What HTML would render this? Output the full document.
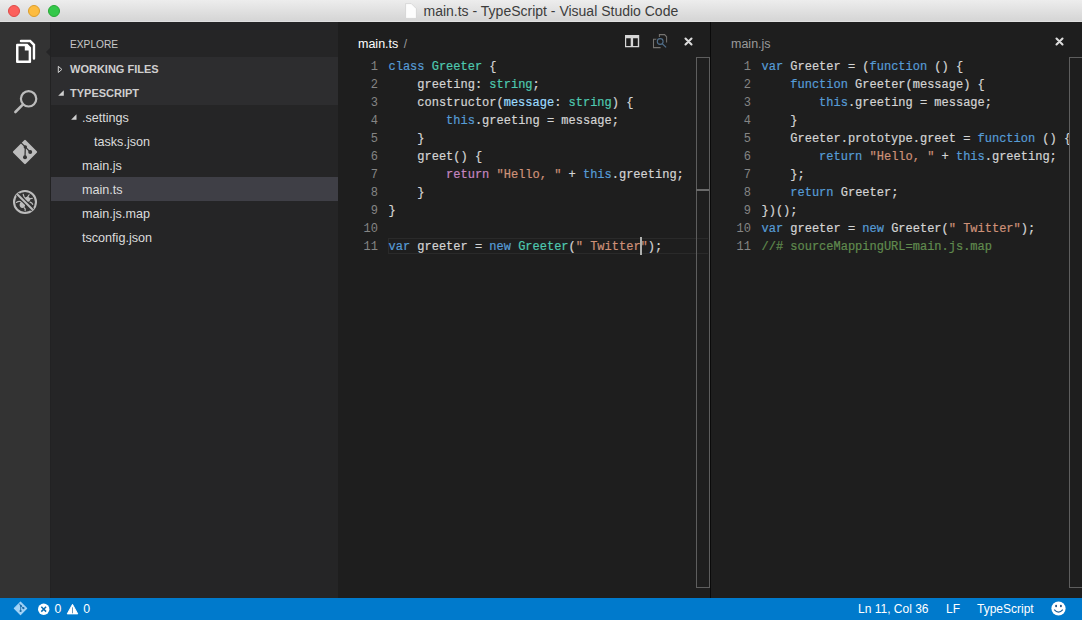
<!DOCTYPE html>
<html><head><meta charset="utf-8">
<style>
*{margin:0;padding:0;box-sizing:border-box}
html,body{width:1082px;height:620px;overflow:hidden;background:#1e1e1e;font-family:"Liberation Sans",sans-serif}
.abs{position:absolute}
#title{left:0;top:0;width:1082px;height:22px;background:linear-gradient(#ededed,#d5d5d5);border-bottom:1px solid #e0e0e0}
.tl{position:absolute;top:5px;width:12px;height:12px;border-radius:50%}
#ttext{position:absolute;left:423.5px;top:3px;font-size:14px;color:#3c3c3c;white-space:nowrap;line-height:16px}
#act{left:0;top:22px;width:50px;height:576px;background:#333333}
#side{left:50px;top:22px;width:288px;height:576px;background:#252526}
#ed1{left:338px;top:22px;width:372px;height:576px;background:#1e1e1e}
#div{left:710px;top:22px;width:1px;height:576px;background:#0a0a0a}
#ed2{left:711px;top:22px;width:371px;height:576px;background:#1e1e1e}
#status{left:0;top:598px;width:1082px;height:22px;background:#007acc;color:#fff;font-size:12px}
.row{position:absolute;left:0;width:288px;height:24px;line-height:25px;color:#dcdcdc;font-size:12.6px;white-space:nowrap}
.row.f{line-height:26px}
.hdr{font-weight:bold;font-size:11px;color:#cfcfcf}
.code{-webkit-text-stroke:0.2px;position:absolute;font-family:"Liberation Mono",monospace;font-size:12px;line-height:18px;white-space:pre;color:#d4d4d4}
.ln{position:absolute;font-family:"Liberation Mono",monospace;font-size:12px;line-height:18px;white-space:pre;color:#858585;text-align:right}
.k{color:#569cd6}.t{color:#4ec9b0}.s{color:#ce9178}.r{color:#c586c0}.p{color:#9cdcfe}.c{color:#608b4e}
</style></head><body>
<div id="title" class="abs">
  <div class="tl" style="left:8px;background:#fc605c;border:0.5px solid #de4a47"></div>
  <div class="tl" style="left:28px;background:#fdbc40;border:0.5px solid #dc9d2a"></div>
  <div class="tl" style="left:48px;background:#34c84a;border:0.5px solid #27a735"></div>
  <svg class="abs" style="left:405px;top:3px" width="12" height="16" viewBox="0 0 12 16"><path d="M0.6 0.6H6.3L11.4 5.7V15.4H0.6Z" fill="#fdfdfd" stroke="#cfcfcf" stroke-width="0.7" stroke-linejoin="round"/></svg>
  <div id="ttext">main.ts - TypeScript - Visual Studio Code</div>
</div>
<div id="act" class="abs">
  <!-- explorer icon -->
  <svg class="abs" style="left:10px;top:12px" width="34" height="34" viewBox="0 0 620 620">
    <path d="M200 127H367L437 197V448" fill="none" stroke="#fff" stroke-width="44" stroke-linejoin="miter" stroke-linecap="round"/>
    <path fill="#fff" fill-rule="evenodd" d="M130 180H318L385 247V510Q385 530 365 530H130Q110 530 110 510V200Q110 180 130 180ZM155 225H270V300H340V485H155Z"/>
  </svg>
  <!-- search icon -->
  <svg class="abs" style="left:12px;top:64px" width="28" height="28" viewBox="0 0 28 28">
    <circle cx="16.6" cy="12.8" r="7.7" fill="none" stroke="#bcbcbc" stroke-width="2.2"/>
    <line x1="11" y1="18.4" x2="3.4" y2="26" stroke="#bcbcbc" stroke-width="2.6" stroke-linecap="round"/>
  </svg>
  <!-- git icon -->
  <svg class="abs" style="left:8px;top:112px" width="34" height="34" viewBox="0 0 34 34">
    <path d="M17 7L28 18L17 29L6 18Z" fill="#bcbcbc" stroke="#bcbcbc" stroke-width="2.2" stroke-linejoin="round"/>
    <path d="M12.6 8.4L17.3 12.9L22.2 18.1M17.3 12.9L17 23.3" fill="none" stroke="#333333" stroke-width="1.25"/>
    <circle cx="17.3" cy="12.9" r="1.7" fill="#333333"/>
    <circle cx="22.2" cy="18.1" r="2" fill="#333333"/>
    <circle cx="17" cy="23.3" r="2" fill="#333333"/>
  </svg>
  <!-- debug icon -->
  <svg class="abs" style="left:8px;top:163px" width="34" height="34" viewBox="0 0 620 620">
    <circle cx="310" cy="310" r="200" fill="none" stroke="#bcbcbc" stroke-width="38"/>
    <ellipse cx="262" cy="362" rx="50" ry="56" fill="#bcbcbc"/>
    <ellipse cx="352" cy="262" rx="52" ry="48" fill="#bcbcbc"/>
    <path d="M240 305Q195 290 152 318M295 415Q325 435 312 470M300 235L278 172M360 215L385 178M392 252L445 242M402 312Q440 322 450 352" fill="none" stroke="#bcbcbc" stroke-width="22" stroke-linecap="round"/>
    <line x1="170" y1="170" x2="450" y2="450" stroke="#333333" stroke-width="80"/>
    <line x1="168" y1="168" x2="452" y2="452" stroke="#bcbcbc" stroke-width="36"/>
  </svg>
  <!-- notch -->
  <div class="abs" style="left:46px;top:25.5px;width:0;height:0;border-top:4.5px solid transparent;border-bottom:4.5px solid transparent;border-right:4px solid #252526"></div>
</div>
<div id="side" class="abs">
  <div class="abs" style="left:0;top:0;width:1px;height:576px;background:#222223;z-index:2"></div>
  <div class="row" style="top:5px;height:35px;line-height:35px;font-size:10.2px;color:#c8c8c8;padding-left:20px">EXPLORE</div>
  <div class="abs" style="left:0;top:35px;width:288px;height:48px;background:#2d2d2f"></div>
  <div class="row hdr" style="top:35px;padding-left:20px">WORKING FILES</div>
  <svg class="abs" style="left:7px;top:43px" width="6" height="8" viewBox="0 0 6 8"><path d="M1.3 1.3L4.9 4.4L1.3 7.5Z" fill="none" stroke="#d0d0d0" stroke-width="1"/></svg>
  <div class="row hdr" style="top:59px;padding-left:20px">TYPESCRIPT</div>
  <svg class="abs" style="left:7.5px;top:67.5px" width="6" height="6" viewBox="0 0 6 6"><path d="M5.8 0.2V5.8H0.2Z" fill="#d0d0d0"/></svg>
  <div class="row f" style="top:83px;padding-left:32px">.settings</div>
  <svg class="abs" style="left:21px;top:92px" width="6" height="6" viewBox="0 0 6 6"><path d="M5.5 0.3V5.7H0.1Z" fill="#d0d0d0"/></svg>
  <div class="row f" style="top:107px;padding-left:44px">tasks.json</div>
  <div class="row f" style="top:131px;padding-left:32px">main.js</div>
  <div class="row f" style="top:155px;padding-left:32px;background:#3f3f46">main.ts</div>
  <div class="row f" style="top:179px;padding-left:32px">main.js.map</div>
  <div class="row f" style="top:203px;padding-left:32px">tsconfig.json</div>
</div>
<div id="ed1" class="abs">
  <div class="abs" style="left:20px;top:0;height:44px;line-height:44px;font-size:12.5px;color:#fff;white-space:nowrap">main.ts <span style="color:#9a9a9a;margin-left:2px;font-size:12px">/</span></div>
  <!-- split icon -->
  <svg class="abs" style="left:286px;top:12px" width="16" height="14" viewBox="0 0 16 14"><path fill="#d6d6d6" fill-rule="evenodd" d="M1 1H15.2V13.2H1ZM2.2 4.2H6.7V11.9H2.2ZM9.1 4.2H13.8V11.9H9.1Z"/></svg>
  <!-- open changes icon -->
  <svg class="abs" style="left:314px;top:12px" width="16" height="15" viewBox="0 0 16 15"><path d="M7.4 3V0.6H12.6L14.6 2.8V8.4M1.5 7V13.6H8.6M1.5 8V5.2H4.5" fill="none" stroke="#757370" stroke-width="1.05"/><circle cx="8.2" cy="7.5" r="2.9" fill="none" stroke="#1e1e1e" stroke-width="2.6"/><circle cx="8.2" cy="7.5" r="2.9" fill="none" stroke="#52708c" stroke-width="1.1"/><line x1="10.4" y1="9.9" x2="14.1" y2="13.4" stroke="#52708c" stroke-width="1.3"/></svg>
  <!-- close -->
  <svg class="abs" style="left:345.6px;top:14.7px" width="9" height="9" viewBox="0 0 9 9"><path d="M1.5 1.5L7.5 7.5M7.5 1.5L1.5 7.5" stroke="#dcdcdc" stroke-width="2.1" stroke-linecap="round"/></svg>
  <!-- line numbers -->
  <div class="ln" style="left:20px;top:36px;width:20px">1
2
3
4
5
6
7
8
9
10
11</div>
  <!-- current line highlight -->
  <div class="abs" style="left:50px;top:216px;width:320px;height:16px;border:1px solid #2a2a2a;border-right:none"></div>
  <div class="code" style="left:50.5px;top:36px"><span class="k">class</span> <span class="t">Greeter</span> {
    greeting: <span class="t">string</span>;
    constructor(<span class="p">message</span>: <span class="t">string</span>) {
        <span class="k">this</span>.greeting = message;
    }
    greet() {
        <span class="r">return</span> <span class="s">"Hello, "</span> + <span class="k">this</span>.greeting;
    }
}

<span class="k">var</span> greeter = <span class="k">new</span> <span class="t">Greeter</span>(<span class="s">" Twitter</span><span class="s">"</span>);</div>
  <div class="abs" style="left:302px;top:215px;width:2px;height:18px;background:#aeafad"></div>
  <!-- overview ruler -->
  <div class="abs" style="left:358px;top:35px;width:13.5px;height:531px;border:1px solid #5e5e5e"></div>
  <div class="abs" style="left:358px;top:167px;width:13px;height:2px;background:#6a6a6a"></div>
</div>
<div id="div" class="abs"></div>
<div id="ed2" class="abs">
  <div class="abs" style="left:20px;top:0;height:44px;line-height:44px;font-size:12.5px;color:#9a9a9a;white-space:nowrap">main.js</div>
  <svg class="abs" style="left:344.2px;top:14.7px" width="9" height="9" viewBox="0 0 9 9"><path d="M1.5 1.5L7.5 7.5M7.5 1.5L1.5 7.5" stroke="#dcdcdc" stroke-width="2.1" stroke-linecap="round"/></svg>
  <div class="ln" style="left:20px;top:36px;width:20px">1
2
3
4
5
6
7
8
9
10
11</div>
  <div class="code" style="left:50.5px;top:36px"><span class="k">var</span> Greeter = (<span class="k">function</span> () {
    <span class="k">function</span> Greeter(message) {
        <span class="k">this</span>.greeting = message;
    }
    Greeter.prototype.greet = <span class="k">function</span> () {
        <span class="k">return</span> <span class="s">"Hello, "</span> + <span class="k">this</span>.greeting;
    };
    <span class="k">return</span> Greeter;
})();
<span class="k">var</span> greeter = <span class="k">new</span> Greeter(<span class="s">" Twitter"</span>);
<span class="c">//# sourceMappingURL=main.js.map</span></div>
  <div class="abs" style="left:358px;top:35px;width:14px;height:531px;border:1px solid #5e5e5e;border-right:none;background:#1e1e1e"></div>
</div>
<div id="status" class="abs">
  <svg class="abs" style="left:13px;top:1px" width="15" height="17" viewBox="0 0 15 17"><path d="M7.5 3.2L13.7 9.4L7.5 15.6L1.3 9.4Z" fill="#a3d3f7" stroke="#a3d3f7" stroke-width="1.1" stroke-linejoin="round"/><path d="M6.2 4.6L7.8 6.7L10.4 9.2M7.8 6.7L7.6 12" fill="none" stroke="#1a6aa6" stroke-width="0.9"/><circle cx="7.8" cy="6.7" r="1" fill="#1a6aa6"/><circle cx="10.4" cy="9.2" r="1.1" fill="#1a6aa6"/><circle cx="7.6" cy="12" r="1.1" fill="#1a6aa6"/></svg>
  <svg class="abs" style="left:37px;top:3px" width="14" height="16" viewBox="0 0 14 16"><circle cx="6.7" cy="8.2" r="5.7" fill="#fff"/><path d="M4.3 5.8L9.1 10.6M9.1 5.8L4.3 10.6" stroke="#0a6cb0" stroke-width="1.5"/></svg>
  <div class="abs" style="left:54.5px;top:0;line-height:22px;font-size:12.3px">0</div>
  <svg class="abs" style="left:66px;top:5px" width="13" height="13" viewBox="0 0 13 13"><path d="M6.5 1.3L11.8 10.9H1.2Z" fill="#fff" stroke="#fff" stroke-width="0.9" stroke-linejoin="round"/><path d="M6.5 4.3V10.3" stroke="#2a6a9a" stroke-width="0.7"/></svg>
  <div class="abs" style="left:83.3px;top:0;line-height:22px;font-size:12.3px">0</div>
  <div class="abs" style="left:858px;top:0;line-height:22px;font-size:12px;white-space:nowrap">Ln 11, Col 36</div>
  <div class="abs" style="left:946px;top:0;line-height:22px;font-size:12px">LF</div>
  <div class="abs" style="left:977px;top:0;line-height:22px;font-size:12px">TypeScript</div>
  <svg class="abs" style="left:1051.3px;top:3.1px" width="15" height="15" viewBox="0 0 15 15"><circle cx="7.5" cy="7.5" r="7.1" fill="#fff"/><ellipse cx="5.1" cy="5.1" rx="0.95" ry="1.25" fill="#1c4f82"/><ellipse cx="9.9" cy="5.1" rx="0.95" ry="1.25" fill="#1c4f82"/><path d="M3.2 8.7Q7.5 13.6 11.8 8.7" fill="none" stroke="#1c5f9a" stroke-width="1.2"/></svg>
</div>
</body></html>
